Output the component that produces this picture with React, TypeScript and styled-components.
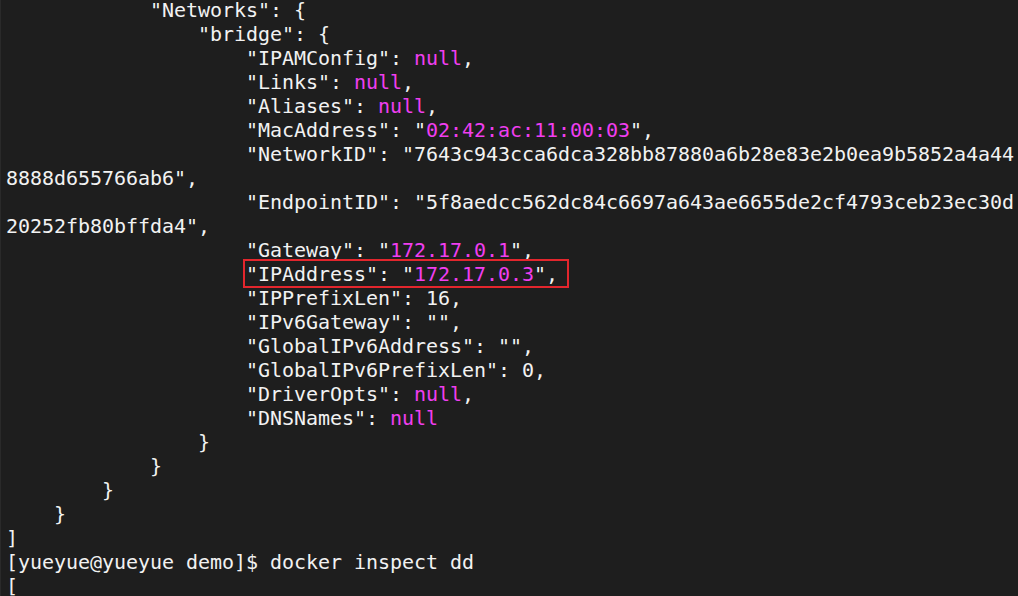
import React from "react";
import styled, { createGlobalStyle } from "styled-components";

const Global = createGlobalStyle`
  html, body {
    margin: 0;
    padding: 0;
    background: #1e1e1e;
    overflow: hidden;
  }
`;

const Terminal = styled.div`
  width: 1018px;
  height: 596px;
  box-sizing: border-box;
  background: #1e1e1e;
  border-left: 1px solid #2a2a2a;
  overflow: hidden;
  padding-left: 5px;
  display: flex;
  flex-direction: column;
`;

const Screen = styled.div`
  margin-top: -2px;
  display: flex;
  flex-direction: column;
`;

const Line = styled.div<{ $indent?: number }>`
  font-family: "DejaVu Sans Mono", "Liberation Mono", monospace;
  font-size: 20px;
  line-height: 24px;
  height: 24px;
  color: #f2f2f2;
  white-space: pre;
  letter-spacing: -0.04px;
  padding-left: ${(p) => (p.$indent ?? 0) * 12}px;
`;

const Val = styled.span`
  color: #f03ef0;
`;

const Boxed = styled.span`
  position: relative;
  &::after {
    content: "";
    position: absolute;
    left: -3px;
    right: -11px;
    top: -3px;
    bottom: -2px;
    border: 2px solid #e3262d;
    pointer-events: none;
  }
`;

export default function App() {
  return (
    <>
      <Global />
      <Terminal>
        <Screen>
          <Line $indent={12}>"Networks": {"{"}</Line>
          <Line $indent={16}>"bridge": {"{"}</Line>
          <Line $indent={20}>
            "IPAMConfig": <Val>null</Val>,
          </Line>
          <Line $indent={20}>
            "Links": <Val>null</Val>,
          </Line>
          <Line $indent={20}>
            "Aliases": <Val>null</Val>,
          </Line>
          <Line $indent={20}>
            "MacAddress": "<Val>02:42:ac:11:00:03</Val>",
          </Line>
          <Line $indent={20}>
            "NetworkID": "7643c943cca6dca328bb87880a6b28e83e2b0ea9b5852a4a44
          </Line>
          <Line>8888d655766ab6",</Line>
          <Line $indent={20}>
            "EndpointID": "5f8aedcc562dc84c6697a643ae6655de2cf4793ceb23ec30d
          </Line>
          <Line>20252fb80bffda4",</Line>
          <Line $indent={20}>
            "Gateway": "<Val>172.17.0.1</Val>",
          </Line>
          <Line $indent={20}>
            <Boxed>
              "IPAddress": "<Val>172.17.0.3</Val>",
            </Boxed>
          </Line>
          <Line $indent={20}>"IPPrefixLen": 16,</Line>
          <Line $indent={20}>"IPv6Gateway": "",</Line>
          <Line $indent={20}>"GlobalIPv6Address": "",</Line>
          <Line $indent={20}>"GlobalIPv6PrefixLen": 0,</Line>
          <Line $indent={20}>
            "DriverOpts": <Val>null</Val>,
          </Line>
          <Line $indent={20}>
            "DNSNames": <Val>null</Val>
          </Line>
          <Line $indent={16}>{"}"}</Line>
          <Line $indent={12}>{"}"}</Line>
          <Line $indent={8}>{"}"}</Line>
          <Line $indent={4}>{"}"}</Line>
          <Line>]</Line>
          <Line>[yueyue@yueyue demo]$ docker inspect dd</Line>
          <Line>[</Line>
        </Screen>
      </Terminal>
    </>
  );
}
